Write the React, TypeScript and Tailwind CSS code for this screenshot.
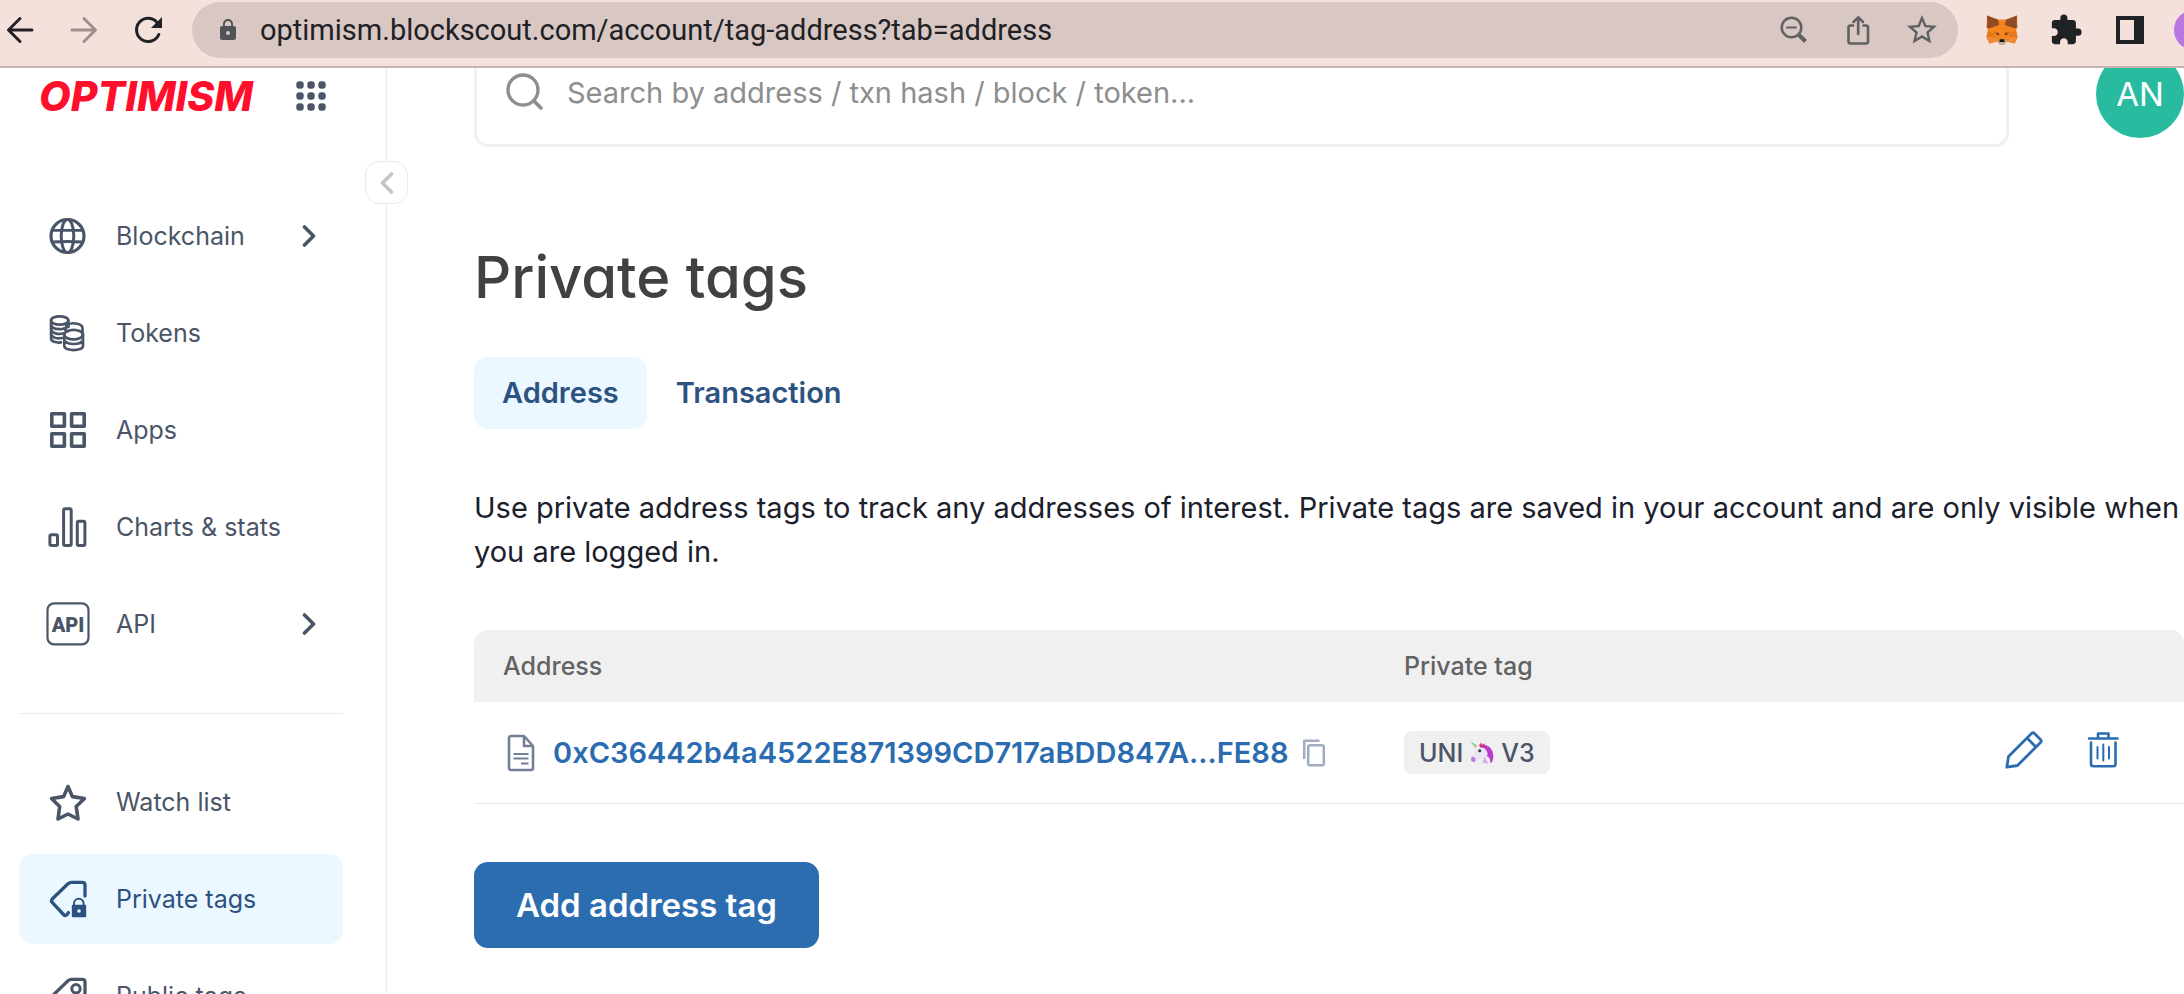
import type { ReactNode } from "react";
import { MdExtension, MdLock, MdStarBorder } from "react-icons/md";

function Svg({ size = 38, children, className = "" }: { size?: number; children: ReactNode; className?: string }) {
  return (
    <svg
      width={size}
      height={size}
      viewBox={`0 0 ${size} ${size}`}
      fill="none"
      stroke="currentColor"
      strokeLinecap="round"
      strokeLinejoin="round"
      aria-hidden="true"
      className={`shrink-0 overflow-visible ${className}`}
    >
      {children}
    </svg>
  );
}

const BackIcon = () => (
  <Svg size={40}>
    <path d="M32 20H9M20 8.500L8.500 20L20 31.500" strokeWidth="3" />
  </Svg>
);

const ForwardIcon = () => (
  <Svg size={40}>
    <path d="M8 20H31M20 8.500L31.500 20L20 31.500" strokeWidth="3" />
  </Svg>
);

const ReloadIcon = () => (
  <Svg size={40}>
    <path d="M30.800 24.500A11.600 11.600 0 1 1 29 12.400" strokeWidth="3" />
    <path d="M34 7V18H23Z" fill="currentColor" stroke="none" />
  </Svg>
);

const ZoomOutIcon = () => (
  <Svg size={40}>
    <circle cx="17.500" cy="17.500" r="9.800" strokeWidth="2.500" />
    <path d="M13 17.500H22" strokeWidth="2" />
    <path d="M25 25L31.500 31.500" strokeWidth="4" strokeLinecap="butt" />
  </Svg>
);

const ShareIcon = () => (
  <Svg size={40}>
    <path d="M15 15.500H12.500Q10.500 15.500 10.500 17.500V31.500Q10.500 33.500 12.500 33.500H28Q30 33.500 30 31.500V17.500Q30 15.500 28 15.500H25.500" strokeWidth="2.600" />
    <path d="M20.200 24V8M15.500 12L20.200 7.300L25 12" strokeWidth="2.600" />
  </Svg>
);

const FoxIcon = () => (
  <svg width="32" height="30" viewBox="0 0 32 30" aria-hidden="true">
    <path d="M1 0.500L12 4.500H20L31 0.500L31.500 12L30 15.500L31.500 22L28.500 28.500L21 26.500L18 29.500H14L11 26.500L3.500 28.500L0.500 22L2 15.500L0.500 12Z" fill="#f5841f" />
    <path d="M1 0.500L12 4.800L13.200 10L3 13.500L0.800 12.200L1.400 8Z" fill="#8f4a26" />
    <path d="M31 0.500L20 4.800L18.800 10L29 13.500L31.200 12.200L30.600 8Z" fill="#8f4a26" />
    <path d="M2 15.500L8 18.500L10.500 26.600L3.500 28.500L0.500 22Z" fill="#e4761b" />
    <path d="M30 15.500L24 18.500L21.500 26.600L28.500 28.500L31.500 22Z" fill="#e4761b" />
    <path d="M0.500 22H9L10.500 26.500L3.500 28.500ZM31.500 22H23L21.500 26.500L28.500 28.500Z" fill="#f08a35" />
    <path d="M8.500 17L13 17.500L13.500 20.500L9 19ZM23.500 17L19 17.500L18.500 20.500L23 19Z" fill="#cd6116" />
    <path d="M10.500 18.300L13 18.700L13 20L11 19.500ZM21.500 18.300L19 18.700L19 20L21 19.500Z" fill="#233447" />
    <path d="M11.500 25L14 24.500H18L20.500 25L18.500 29.700H13.500Z" fill="#c0ad9e" />
    <path d="M13.700 24.300H18.300L18.700 27H13.300Z" fill="#161616" />
  </svg>
);

const PanelIcon = () => (
  <svg width="28" height="28" viewBox="0 0 28 28" aria-hidden="true">
    <path d="M0 0H28V28H0ZM4 4V24H18V4Z" fill="currentColor" fillRule="evenodd" />
  </svg>
);

const GlobeIcon = () => (
  <Svg>
    <circle cx="19.500" cy="19" r="16.500" strokeWidth="3.200" />
    <ellipse cx="19.500" cy="19" rx="6.300" ry="16.500" strokeWidth="3" />
    <path d="M4.500 13.300H34.500M4.500 25Q19.500 24 34.500 25" strokeWidth="2.800" />
  </Svg>
);

const CoinsIcon = () => (
  <Svg>
    <g strokeWidth="2.700">
      <ellipse cx="11.700" cy="6.500" rx="8.600" ry="4.200" />
      <path d="M3.100 6.500V24.500C3.100 27.500 8 29 13 28.400M20.300 6.500V13" />
      <path d="M3.100 11.500C4.500 16 17 16.500 20.300 12M3.100 16C5 20 11 20.500 15.500 19.300M3.100 20.500C5 24.200 10 24.700 14 24" />
      <path d="M18 11.500C22 7.700 34.500 9 34.500 14.200V21M20.300 17.200Q17 16.500 16 14.500" />
      <ellipse cx="25.600" cy="20.600" rx="9.300" ry="4.800" />
      <path d="M16.300 20.600V32C16.300 37.500 35 37.500 35 32V20.600M16.300 26C18.500 31.300 33 31.300 35 26" />
    </g>
  </Svg>
);

const AppsIcon = () => (
  <Svg>
    <g strokeWidth="3.600">
      <rect x="3.800" y="2.800" width="12.600" height="12.400" />
      <rect x="23.600" y="2.800" width="12.600" height="12.400" />
      <rect x="3.800" y="22.800" width="12.600" height="12.400" />
      <rect x="23.600" y="22.800" width="12.600" height="12.400" />
    </g>
  </Svg>
);

const ChartsIcon = () => (
  <Svg>
    <g strokeWidth="3">
      <rect x="1.900" y="26.800" width="7.600" height="10.700" rx="1.500" />
      <rect x="15.600" y="0.800" width="7.600" height="36.700" rx="1.500" />
      <rect x="29.300" y="13.300" width="7.600" height="24.200" rx="1.500" />
    </g>
  </Svg>
);

const ApiIcon = () => (
  <Svg>
    <rect x="-0.500" y="-1.700" width="41" height="41" rx="6.500" strokeWidth="2.200" />
    <text
      x="20"
      y="26.500"
      textAnchor="middle"
      fontSize="20"
      fontWeight="900"
      fill="currentColor"
      stroke="none"
      className="font-['Roboto',sans-serif]"
    >
      API
    </text>
  </Svg>
);

const StarIcon = () => (
  <Svg>
    <path
      d="M20 3.500L24.400 13.600L36.500 15.500L28.200 23.500L30 36L20 31L10 36L11.700 23.500L3.500 15.500L15.600 13.600Z"
      strokeWidth="3.600"
    />
  </Svg>
);

const PrivateTagIcon = () => (
  <Svg>
    <path d="M37 16V5Q37 2.300 34.300 2.300H23.500Q21.500 2.300 20 3.700L4.200 19Q2.700 20.700 4.200 22.400L15.500 34.500Q17.500 36.700 19.500 34L20.500 32.500" strokeWidth="3.300" />
    <path d="M26 25.500V23.500A4.800 4.800 0 0 1 35.600 23.500V25.500" strokeWidth="2" />
    <path
      d="M25 24.700H37Q38.200 24.700 38.200 26V36Q38.200 37.200 37 37.200H25Q23.800 37.200 23.800 36V26Q23.800 24.700 25 24.700ZM31 29.200A1.800 1.800 0 1 0 31 32.800A1.800 1.800 0 1 0 31 29.200Z"
      fill="currentColor"
      fillRule="evenodd"
      stroke="none"
    />
  </Svg>
);

const PublicTagIcon = () => (
  <Svg>
    <path d="M37 16V5Q37 2.300 34.300 2.300H23.500Q21.500 2.300 20 3.700L4.200 19Q2.700 20.700 4.200 22.400L15.500 34.500Q17.500 36.700 19.500 34L35.500 19Q37 17.500 37 16Z" strokeWidth="3.300" />
    <circle cx="28" cy="11.800" r="4.200" strokeWidth="3" />
  </Svg>
);

const DocumentIcon = () => (
  <svg width="28" height="38" viewBox="0 0 28 38" fill="none" stroke="currentColor" strokeWidth="2.600" strokeLinejoin="round" aria-hidden="true" className="shrink-0 text-[#718096]">
    <path d="M2 4Q2 2 4 2H17L26 12V34Q26 36 24 36H4Q2 36 2 34Z" />
    <path d="M17 2V12H26" />
    <path d="M6.500 20H21.500M6.500 24.500H21.500M14 29.500H21.500" strokeWidth="2.200" />
  </svg>
);

const CopyIcon = () => (
  <svg width="24" height="28" viewBox="0 0 24 28" fill="none" stroke="currentColor" strokeWidth="2.500" strokeLinejoin="round" aria-hidden="true">
    <rect x="6.200" y="6.200" width="15.600" height="20" rx="1.500" />
    <path d="M2.200 20V1.700H17.500" />
  </svg>
);

const PencilIcon = () => (
  <Svg size={40}>
    <path d="M2.800 37.200L4.500 26.500L27.500 3.500Q29 2 30.500 3.500L36.500 9.500Q38 11 36.500 12.500L13.500 35.500ZM23 8L32 17" strokeWidth="2.800" />
  </Svg>
);

const TrashIcon = () => (
  <Svg size={40}>
    <path d="M6 8.500H34.500M15 8V3.500H25.500V8M8 12.500V34Q8 36.200 10.200 36.200H30.300Q32.500 36.200 32.500 34V12.500" strokeWidth="2.600" />
    <path d="M14.500 17V28.500M20.300 14.500V30.500M26 17V28.500" strokeWidth="2" />
  </Svg>
);

const UnicornIcon = () => (
  <svg width="24" height="24" viewBox="0 0 24 24" aria-hidden="true" className="shrink-0">
    <path d="M8 5Q14 1.500 19.500 6Q25 11.500 22.500 20Q21.500 22.500 20 21.500Q21 17 17 15L11 8Z" fill="#b83ad0" />
    <path d="M7 7L9.500 4L11 6Q16.500 7 17.800 13Q15 17 18.500 22Q14 24 10.500 22Q12 19 10.500 17.500Q8 20 5 21Q1.500 21 1 18.500Q2.500 13 5.500 10Z" fill="#e9e6f2" />
    <path d="M1.500 16Q4 15 5.500 17.500Q6 20.500 4 21Q1 21 1 18.500Z" fill="#c07bd8" />
    <path d="M9 4L11.500 1.500L12 4.500L14.500 2L14.500 6.500L10.500 6.500Z" fill="#d0307e" />
    <path d="M15 15Q15.500 20 18.500 22.200Q15 23 13 21Z" fill="#d9a6d8" />
    <path d="M0.500 0.500L7 4.500L5.500 7Z" fill="#53c7a8" />
    <path d="M3.500 3.400L7 5L5.500 7Z" fill="#f1b95c" />
    <circle cx="9.700" cy="9.700" r="1.500" fill="#3a3148" />
  </svg>
);

const Chevron = () => (
  <svg width="14" height="24" viewBox="0 0 14 24" fill="none" stroke="currentColor" strokeWidth="3.600" strokeLinecap="round" strokeLinejoin="round" aria-hidden="true">
    <path d="M2.500 3L11.500 12L2.500 21" />
  </svg>
);

type NavEntry = { label: string; icon: ReactNode; expandable?: boolean; active?: boolean };

const mainNav: NavEntry[] = [
  { label: "Blockchain", icon: <GlobeIcon />, expandable: true },
  { label: "Tokens", icon: <CoinsIcon /> },
  { label: "Apps", icon: <AppsIcon /> },
  { label: "Charts & stats", icon: <ChartsIcon /> },
  { label: "API", icon: <ApiIcon />, expandable: true },
];

const accountNav: NavEntry[] = [
  { label: "Watch list", icon: <StarIcon /> },
  { label: "Private tags", icon: <PrivateTagIcon />, active: true },
  { label: "Public tags", icon: <PublicTagIcon /> },
];

function NavList({ items }: { items: NavEntry[] }) {
  return (
    <ul className="flex flex-col gap-[7px]">
      {items.map((item) => (
        <li key={item.label}>
          <a
            href="#"
            aria-current={item.active ? "page" : undefined}
            className={`flex h-[90px] items-center rounded-[14px] pr-[27px] pl-[29px] text-[25px] leading-9 ${
              item.active ? "bg-[#ebf8ff] text-[#2c5282]" : "text-[#4a5568]"
            }`}
          >
            {item.icon}
            <span className="ml-[30px] flex-1">{item.label}</span>
            {item.expandable && <Chevron />}
          </a>
        </li>
      ))}
    </ul>
  );
}

function BrowserBar() {
  const tool = "flex size-10 shrink-0 items-center justify-center";
  return (
    <div className="flex h-[68px] shrink-0 items-start gap-6 border-b-2 border-[#c6b4b0] bg-[#f4e1db] pt-[2px] text-[#202124]">
      <div className="flex h-14 items-center gap-6">
        <button type="button" aria-label="Back" className={tool}><BackIcon /></button>
        <button type="button" aria-label="Forward" className={`${tool} text-[#9d8f8e]`}><ForwardIcon /></button>
        <button type="button" aria-label="Reload" className={tool}><ReloadIcon /></button>
      </div>
      <div className="flex h-14 min-w-0 flex-1 items-center rounded-full bg-[#d9c7c3] pr-4 pl-6 text-[#5f6163]">
        <MdLock size={24} className="shrink-0 text-[#505356]" aria-hidden="true" />
        <input
          type="text"
          aria-label="Web address"
          defaultValue="optimism.blockscout.com/account/tag-address?tab=address"
          className="ml-5 min-w-0 flex-1 bg-transparent font-['Roboto',sans-serif] text-[29px] leading-9 text-[#202124] outline-none"
        />
        <div className="flex items-center gap-6">
          <button type="button" aria-label="Zoom" className={tool}><ZoomOutIcon /></button>
          <button type="button" aria-label="Share" className={tool}><ShareIcon /></button>
          <button type="button" aria-label="Bookmark" className={tool}><MdStarBorder size={36} /></button>
        </div>
      </div>
      <div className="flex h-14 items-center gap-6">
        <button type="button" aria-label="Wallet" className={tool}><FoxIcon /></button>
        <button type="button" aria-label="Extensions" className={tool}><MdExtension size={34} /></button>
        <button type="button" aria-label="Side panel" className={tool}><PanelIcon /></button>
        <button type="button" aria-label="Profile" className="h-10 w-[10px] overflow-hidden">
          <span className="block size-10 rounded-full bg-[#b876e0]" />
        </button>
      </div>
    </div>
  );
}

function Sidebar() {
  return (
    <aside className="relative w-[387px] shrink-0 border-r border-[#ebebeb] pr-[43px] pl-[19px]">
      <div className="mb-[67px] flex h-14 items-center justify-between pr-[17px] pl-5">
        <a href="#" className="text-[41px] leading-none font-extrabold text-[#ff0f2b] italic">OPTIMISM</a>
        <button type="button" aria-label="Networks" className="text-[#4a5568]">
          <svg width="30" height="30" viewBox="0 0 30 30" fill="currentColor" aria-hidden="true">
            {[4, 15, 26].map((y) => [4, 15, 26].map((x) => <rect key={`${x}-${y}`} x={x - 3.7} y={y - 3.7} width="7.400" height="7.400" rx="3" />))}
          </svg>
        </button>
      </div>
      <button
        type="button"
        aria-label="Collapse menu"
        className="absolute top-[93px] -right-[22px] flex size-[43px] items-center justify-center rounded-[14px] border border-[#ebebeb] bg-white text-[#c4c4c4]"
      >
        <span className="rotate-180"><Chevron /></span>
      </button>
      <nav aria-label="Main">
        <NavList items={mainNav} />
        <hr className="mt-[44px] mb-[43px] border-[#ebebeb]" />
        <NavList items={accountNav} />
      </nav>
    </aside>
  );
}

function TagsTable() {
  return (
    <table className="mt-14 w-full border-separate border-spacing-0 text-left">
      <thead className="text-[25px] leading-9 text-[#616263]">
        <tr className="h-[72px]">
          <th className="w-[930px] rounded-tl-[14px] bg-[#f0f0f0] pl-[29px] font-medium">Address</th>
          <th className="bg-[#f0f0f0] font-medium">Private tag</th>
          <th className="w-[197px] rounded-tr-[14px] bg-[#f0f0f0]" aria-label="Actions" />
        </tr>
      </thead>
      <tbody>
        <tr className="h-[102px]">
          <td className="border-b border-[#ebebeb] pl-[33px]">
            <div className="flex items-center">
              <DocumentIcon />
              <a href="#" className="ml-[18px] text-[29px] leading-[44px] font-semibold text-[#2b6cb0]">
                0xC36442b4a4522E871399CD717aBDD847A...FE88
              </a>
              <button type="button" aria-label="Copy address" className="ml-[14px] text-[#a0aec0]"><CopyIcon /></button>
            </div>
          </td>
          <td className="border-b border-[#ebebeb]">
            <span className="inline-flex h-[43px] items-center gap-[7px] rounded-lg bg-[#f0f0f0] px-[15px] align-middle text-[25px] leading-9 font-medium text-[#4a5568]">
              UNI <UnicornIcon /> V3
            </span>
          </td>
          <td className="border-b border-[#ebebeb] pr-[61px] pb-[6px] text-[#2b6cb0]">
            <div className="flex items-center justify-end gap-[39px]">
              <button type="button" aria-label="Edit"><PencilIcon /></button>
              <button type="button" aria-label="Delete"><TrashIcon /></button>
            </div>
          </td>
        </tr>
      </tbody>
    </table>
  );
}

export default function App() {
  return (
    <div className="flex h-screen flex-col overflow-hidden bg-white font-['Inter',sans-serif] text-[#1a202c]">
      <BrowserBar />
      <div className="flex min-h-0 flex-1">
        <Sidebar />
        <main className="min-w-0 flex-1 pl-[87px]">
          <div className="flex items-start gap-[87px]">
            <label className="flex h-[79px] flex-1 items-start rounded-b-[14px] border-x-[3px] border-b-[3px] border-[#f0f0f0] pt-[3px] pl-7">
              <Svg size={40} className="text-[#8d8e8e]">
                <circle cx="18" cy="19" r="15" strokeWidth="3.400" />
                <path d="M29 30L36 37" strokeWidth="3.800" />
              </Svg>
              <input
                type="search"
                aria-label="Search"
                placeholder="Search by address / txn hash / block / token..."
                className="ml-[22px] h-11 min-w-0 flex-1 bg-transparent text-[29px] leading-[44px] outline-none placeholder:text-[#8d8e8e]"
              />
            </label>
            <button type="button" className="flex h-[70px] w-[88px] items-end overflow-hidden" aria-label="Account">
              <span className="flex size-[88px] shrink-0 items-center justify-center rounded-full bg-[#29bb9f] text-[33px] leading-none text-white">AN</span>
            </button>
          </div>

          <h1 className="mt-[94px] text-[58px] leading-[72px] font-medium text-[#414141] [font-feature-settings:'cv11']">Private tags</h1>

          <div role="tablist" className="mt-11 flex text-[29px] leading-[44px] font-semibold text-[#2c5282]">
            <button type="button" role="tab" aria-selected="true" className="h-[72px] rounded-[14px] bg-[#ebf8ff] px-7">Address</button>
            <button type="button" role="tab" aria-selected="false" className="h-[72px] px-[29px]">Transaction</button>
          </div>

          <p className="mt-[57px] text-[29px] leading-[44px]">
            Use private address tags to track any addresses of interest. Private tags are saved in your account and are only visible when you are logged in.
          </p>

          <TagsTable />

          <button type="button" className="mt-[58px] h-[86px] rounded-[14px] bg-[#2c6db0] px-[42px] text-[33px] leading-[44px] font-semibold text-white">
            Add address tag
          </button>
        </main>
      </div>
    </div>
  );
}
